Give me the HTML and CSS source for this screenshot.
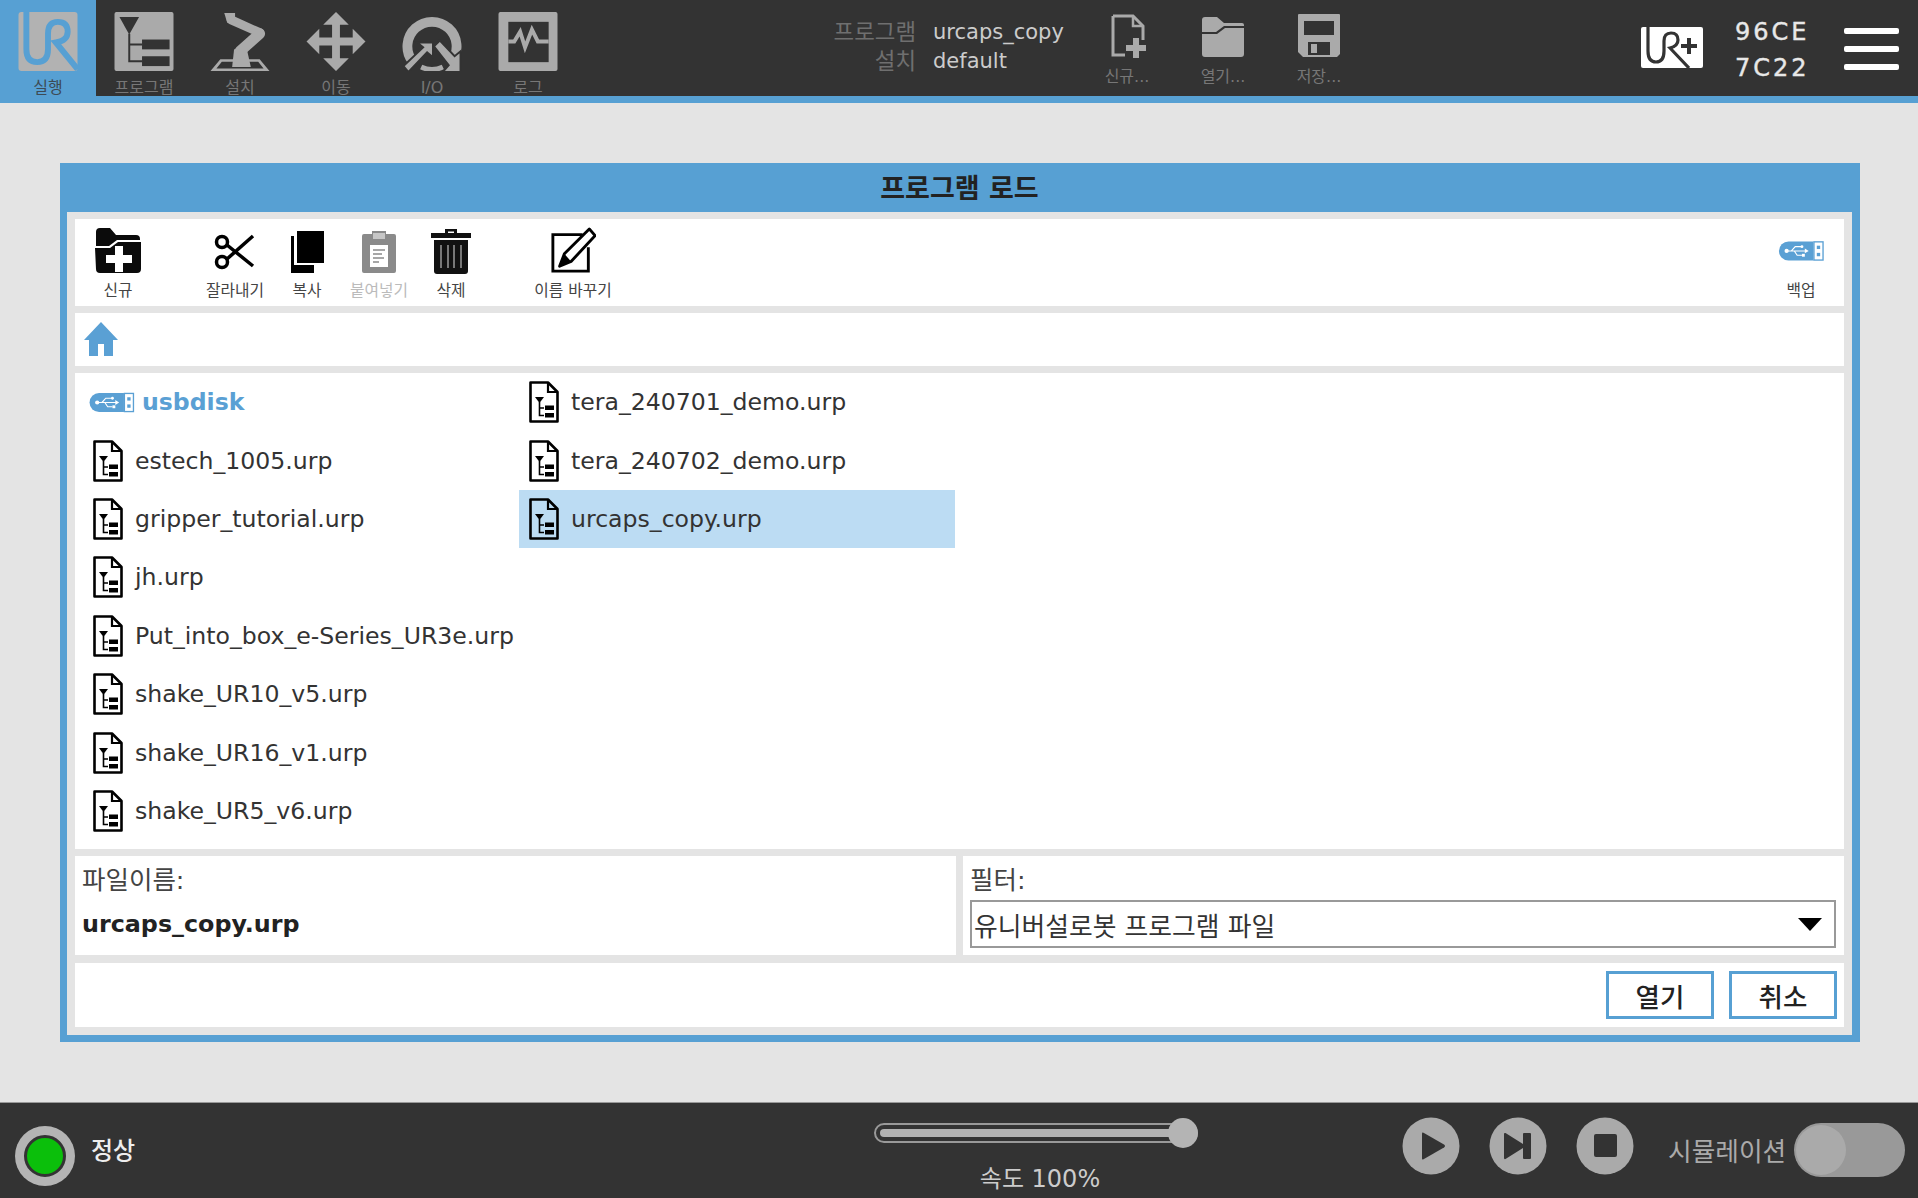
FILE: index.html
```html
<!DOCTYPE html>
<html lang="ko">

<head>
    <meta charset="UTF-8">
    <title>프로그램 로드</title>
    <link rel="stylesheet" href="styles.css">
</head>

<body>
    <svg class="defs" width="0" height="0">
        <symbol id="urp" viewBox="0 0 30 42">
            <path d="M1.500 1.500H19L28.500 11V40.500H1.500Z" fill="none" stroke="#000" stroke-width="2.6" stroke-linejoin="round"/>
            <path d="M19 1.500V11H28.500" fill="none" stroke="#000" stroke-width="2.2"/>
            <path d="M6 16H15L10.500 22Z" fill="#000"/>
            <path d="M10.500 21V34.500H15M10.500 27H15" fill="none" stroke="#000" stroke-width="1.6"/>
            <rect x="16" y="24.500" width="9" height="4.500"/>
            <rect x="16" y="32" width="9" height="4.500"/>
        </symbol>
        <symbol id="usb" viewBox="0 0 48 22">
            <path d="M11 1H37V21H11A10 10 0 0 1 11 1Z" fill="#5aa0d4"/>
            <rect x="37.500" y="1.500" width="9.500" height="19" fill="#fff" stroke="#5aa0d4" stroke-width="1.4"/>
            <rect x="40.500" y="5.500" width="3.500" height="3.500" fill="#5aa0d4"/>
            <rect x="40.500" y="13" width="3.500" height="3.500" fill="#5aa0d4"/>
            <path d="M9 11H29M14 11L18 6.500H24M17 11L20 15.500H25" fill="none" stroke="#fff" stroke-width="1.2"/>
            <circle cx="9" cy="11" r="2.200" fill="#fff"/>
            <circle cx="25" cy="6.500" r="1.500" fill="#fff"/>
            <rect x="25" y="14" width="3" height="3" fill="#fff"/>
            <path d="M28 8.500L32 11L28 13.500Z" fill="#fff"/>
        </symbol>
    </svg>

    <header class="topbar">
        <nav class="tabs">
            <div class="tab tab-active">
                <svg class="tab-icon" viewBox="0 0 60 60">
                    <rect width="60" height="60" rx="3" fill="#b2b2b2"/>
                    <path d="M8 0V38Q8 51 19 51Q30 51 30 38V22Q30 10 40 10Q50 10 50 20Q50 29 38 31L60 58" fill="none" stroke="#57a0d3" stroke-width="6"/>
                </svg>
                <span>실행</span>
            </div>
            <div class="tab">
                <svg class="tab-icon" viewBox="0 0 60 60">
                    <rect width="60" height="60" rx="2" fill="#aaa"/>
                    <path d="M5 5H25L15 23Z" fill="#333"/>
                    <path d="M15 22V50H28M15 33H28" fill="none" stroke="#333" stroke-width="2"/>
                    <rect x="28" y="28" width="28" height="10" fill="#333"/>
                    <rect x="28" y="45" width="28" height="10" fill="#333"/>
                </svg>
                <span>프로그램</span>
            </div>
            <div class="tab">
                <svg class="tab-icon" viewBox="0 0 60 60">
                    <path d="M0 60L10 48H50L60 60ZM6 57.500H54L48.500 50.500H11.500Z" fill="#aaa" fill-rule="evenodd"/>
                    <path d="M14 1H25V11H17Z" fill="#aaa"/>
                    <path d="M21 8L50 21" fill="none" stroke="#aaa" stroke-width="9" stroke-linecap="round"/>
                    <path d="M50 22L30 40" fill="none" stroke="#aaa" stroke-width="11" stroke-linecap="round"/>
                    <path d="M24 38H37L41 56H22Z" fill="#aaa"/>
                </svg>
                <span>설치</span>
            </div>
            <div class="tab">
                <svg class="tab-icon" viewBox="0 0 60 60">
                    <path d="M30 0L43 13H34V26H47V17L60 30L47 43V34H34V47H43L30 60L17 47H26V34H13V43L0 30L13 17V26H26V13H17Z" fill="#aaa"/>
                </svg>
                <span>이동</span>
            </div>
            <div class="tab">
                <svg class="tab-icon" viewBox="0 0 60 60">
                    <path d="M10 50A25 25 0 1 1 50 50" fill="none" stroke="#aaa" stroke-width="10"/>
                    <path d="M19 56A26 26 0 0 0 41 56" fill="none" stroke="#aaa" stroke-width="5"/>
                    <path d="M1 55L21 36L15 31H31V46L25 41L6 61Z" fill="#aaa" stroke="#333" stroke-width="2"/>
                    <path d="M32 35L38 29L53 45L59 40V61H41L47 54Z" fill="#aaa" stroke="#333" stroke-width="2"/>
                </svg>
                <span>I/O</span>
            </div>
            <div class="tab">
                <svg class="tab-icon" viewBox="0 0 60 60">
                    <rect width="60" height="60" rx="2" fill="#aaa"/>
                    <rect x="10" y="10" width="41" height="41" fill="#333"/>
                    <path d="M10 30H16L22 20L27 36L34 18L40 30H51" fill="none" stroke="#aaa" stroke-width="4"/>
                </svg>
                <span>로그</span>
            </div>
        </nav>

        <div class="prog-info">
            <span class="info-key">프로그램</span><span class="info-val">urcaps_copy</span>
            <span class="info-key">설치</span><span class="info-val">default</span>
        </div>

        <div class="file-btn">
            <svg class="file-icon" viewBox="0 0 44 44">
                <path d="M8 2H28L38 12V26M20 41H8V2" fill="none" stroke="#aaa" stroke-width="3"/>
                <path d="M28 2V12H38" fill="none" stroke="#aaa" stroke-width="2.500"/>
                <path d="M28 24H34V31H41V37H34V44H28V37H21V31H28Z" fill="#aaa"/>
            </svg>
            <span>신규...</span>
        </div>
        <div class="file-btn">
            <svg class="file-icon" viewBox="0 0 44 44">
                <path d="M1 6Q1 3 4 3H16L23 9H41Q43 9 43 11V12H23L15 18H1Z" fill="#aaa"/>
                <path d="M1 20H16L24 14H43V40Q43 43 40 43H4Q1 43 1 40Z" fill="#aaa"/>
            </svg>
            <span>열기...</span>
        </div>
        <div class="file-btn">
            <svg class="file-icon" viewBox="0 0 44 44">
                <path d="M2 0H42Q43 0 43 1V40L40 43H6L1 38V1Q1 0 2 0Z" fill="#aaa"/>
                <rect x="7" y="7" width="30" height="14" fill="#333"/>
                <rect x="11" y="28" width="22" height="13" fill="#333"/>
                <rect x="14" y="30" width="6" height="9" fill="#aaa"/>
            </svg>
            <span>저장...</span>
        </div>

        <svg class="ur-plus" viewBox="0 0 62 41">
            <path d="M2 0H60Q62 0 62 2V39Q62 41 60 41H2Q0 41 0 39V2Q0 0 2 0Z" fill="#fff"/>
            <path d="M7 0V24Q7 35 15 35Q23 35 23 24V14Q23 6 30 6Q37 6 37 13Q37 19 29 21L48 41" fill="none" stroke="#333" stroke-width="3.200"/>
            <path d="M46 11H50V17H56V21H50V27H46V21H40V17H46Z" fill="#333"/>
        </svg>

        <div class="serial">
            <span>96CE</span>
            <span>7C22</span>
        </div>

        <div class="menu-btn">
            <i></i><i></i><i></i>
        </div>
    </header>

    <main class="main">
        <section class="dialog">
            <h1 class="dialog-title">프로그램 로드</h1>
            <div class="dialog-body">
                <div class="panel toolbar">
                    <div class="tool">
                        <svg class="tool-icon" viewBox="0 0 46 46">
                            <path d="M1 5Q1 1 5 1H15L21 8H41Q45 8 45 12V13H22L14 19H1Z" fill="#0b0b0b"/>
                            <path d="M0 21H15L23 15H46V42Q46 46 42 46H5Q1 46 1 42Z" fill="#0b0b0b"/>
                            <path d="M20 19H28V28H37V36H28V45H20V36H11V28H20Z" fill="#fff"/>
                        </svg>
                        <span>신규</span>
                    </div>
                    <div class="tool tool-cut">
                        <svg class="tool-icon" viewBox="0 0 46 46">
                            <circle cx="10" cy="15" r="5.500" fill="none" stroke="#000" stroke-width="3.500"/>
                            <circle cx="10" cy="35" r="5.500" fill="none" stroke="#000" stroke-width="3.500"/>
                            <path d="M15 18L41 39M15 32L41 9" fill="none" stroke="#000" stroke-width="3.500"/>
                        </svg>
                        <span>잘라내기</span>
                    </div>
                    <div class="tool">
                        <svg class="tool-icon" viewBox="0 0 46 46">
                            <path d="M7 9H10V38H30V46H7Z" fill="#000"/>
                            <rect x="13" y="4" width="27" height="32" fill="#000"/>
                        </svg>
                        <span>복사</span>
                    </div>
                    <div class="tool tool-off">
                        <svg class="tool-icon" viewBox="0 0 46 46">
                            <path d="M8 7H16V4H30V7H38Q40 7 40 9V44Q40 46 38 46H8Q6 46 6 44V9Q6 7 8 7Z" fill="#8a8a8a"/>
                            <rect x="17" y="6" width="12" height="6" fill="#c6c6c6"/>
                            <rect x="14" y="18" width="18" height="22" fill="#fff"/>
                            <path d="M17 23H29M17 27H26M17 31H28M17 35H23" stroke="#8a8a8a" stroke-width="1.500"/>
                        </svg>
                        <span>붙여넣기</span>
                    </div>
                    <div class="tool">
                        <svg class="tool-icon" viewBox="0 0 46 46">
                            <path d="M17 6V2H29V6H43V11H3V6ZM20 4.500V6H26V4.500Z" fill="#111" fill-rule="evenodd"/>
                            <path d="M6 13H40V44Q40 47 37 47H9Q6 47 6 44Z" fill="#111"/>
                            <path d="M13 18V41M20 18V41M26 18V41M33 18V41" stroke="#777" stroke-width="2"/>
                        </svg>
                        <span>삭제</span>
                    </div>
                    <div class="tool tool-rename">
                        <svg class="tool-icon" viewBox="0 0 48 46">
                            <path d="M34 7H3V45H40V20" fill="none" stroke="#000" stroke-width="3"/>
                            <path d="M41 1L47 8L22 35L10 40L15 27Z" fill="#fff" stroke="#000" stroke-width="3" stroke-linejoin="round"/>
                            <path d="M10 40L15 27L22 35Z" fill="#000"/>
                        </svg>
                        <span>이름 바꾸기</span>
                    </div>
                    <div class="tool tool-backup">
                        <svg class="tool-icon" viewBox="0 0 48 46"><use href="#usb" x="0" y="13" width="48" height="22"/></svg>
                        <span>백업</span>
                    </div>
                </div>

                <div class="panel path-bar">
                    <svg class="home" viewBox="0 0 34 34">
                        <path d="M17 0L34 18H29V34H20V22H14V34H5V18H0Z" fill="#5aa0d4"/>
                    </svg>
                </div>

                <div class="panel file-list">
                    <div class="row row-usb">
                        <svg class="usb-icon"><use href="#usb"/></svg>
                        <span>usbdisk</span>
                    </div>
                    <div class="row"><svg class="urp-icon"><use href="#urp"/></svg><span>estech_1005.urp</span></div>
                    <div class="row"><svg class="urp-icon"><use href="#urp"/></svg><span>gripper_tutorial.urp</span></div>
                    <div class="row"><svg class="urp-icon"><use href="#urp"/></svg><span>jh.urp</span></div>
                    <div class="row"><svg class="urp-icon"><use href="#urp"/></svg><span>Put_into_box_e-Series_UR3e.urp</span></div>
                    <div class="row"><svg class="urp-icon"><use href="#urp"/></svg><span>shake_UR10_v5.urp</span></div>
                    <div class="row"><svg class="urp-icon"><use href="#urp"/></svg><span>shake_UR16_v1.urp</span></div>
                    <div class="row"><svg class="urp-icon"><use href="#urp"/></svg><span>shake_UR5_v6.urp</span></div>
                    <div class="row"><svg class="urp-icon"><use href="#urp"/></svg><span>tera_240701_demo.urp</span></div>
                    <div class="row"><svg class="urp-icon"><use href="#urp"/></svg><span>tera_240702_demo.urp</span></div>
                    <div class="row row-selected"><svg class="urp-icon"><use href="#urp"/></svg><span>urcaps_copy.urp</span></div>
                </div>

                <div class="field-row">
                    <div class="panel field">
                        <label class="field-label">파일이름:</label>
                        <div class="field-value">urcaps_copy.urp</div>
                    </div>
                    <div class="panel field">
                        <label class="field-label">필터:</label>
                        <div class="select">
                            <span>유니버설로봇 프로그램 파일</span>
                            <i class="select-arrow"></i>
                        </div>
                    </div>
                </div>

                <div class="panel actions">
                    <button class="action-btn" type="button">열기</button>
                    <button class="action-btn" type="button">취소</button>
                </div>
            </div>
        </section>
    </main>

    <footer class="bottombar">
        <div class="status-light"><i></i></div>
        <div class="status-text">정상</div>

        <div class="speed">
            <div class="slider">
                <div class="slider-fill"></div>
                <div class="slider-knob"></div>
            </div>
            <div class="speed-text">속도 100%</div>
        </div>

        <div class="controls">
            <svg class="ctl" viewBox="0 0 58 58">
                <circle cx="29" cy="29" r="28.500" fill="#aaa"/>
                <path d="M20 16.500Q20 15 21.500 15.800L42 27.500Q44 29 42 30.500L21.500 42.200Q20 43 20 41.500Z" fill="#333"/>
            </svg>
            <svg class="ctl" viewBox="0 0 58 58">
                <circle cx="29" cy="29" r="28.500" fill="#aaa"/>
                <path d="M15 17Q15 15.500 16.500 16L34 27V17Q34 16 35 16H41Q42 16 42 17V41Q42 42 41 42H35Q34 42 34 41V31L16.500 42Q15 42.500 15 41Z" fill="#333"/>
            </svg>
            <svg class="ctl" viewBox="0 0 58 58">
                <circle cx="29" cy="29" r="28.500" fill="#aaa"/>
                <rect x="18" y="17" width="23" height="23" rx="2" fill="#333"/>
            </svg>
        </div>

        <div class="sim-text">시뮬레이션</div>
        <div class="toggle"><i></i></div>
    </footer>
</body>

</html>
```

FILE: styles.css
```css
* {
    box-sizing: border-box;
}

html,
body {
    margin: 0;
    padding: 0;
}

body {
    width: 1918px;
    height: 1198px;
    overflow: hidden;
    display: flex;
    flex-direction: column;
    background-color: #e4e4e4;
    font-family: "DejaVu Sans", "Noto Sans CJK KR", sans-serif;
}

.defs {
    position: absolute;
}

/* top bar */
.topbar {
    height: 103px;
    display: flex;
    align-items: flex-start;
    background-color: #333;
    border-bottom: 7px solid #57a0d3;
}

.tabs {
    display: flex;
}

.tab {
    width: 96px;
    height: 96px;
    display: flex;
    flex-direction: column;
    align-items: center;
    padding-top: 12px;
    font-size: 16px;
    line-height: 16px;
    color: #777;
}

.tab-active {
    background-color: #57a0d3;
    color: #3d4a55;
}

.tab-icon {
    width: 60px;
    height: 60px;
    margin-bottom: 9px;
}

.prog-info {
    width: 263px;
    margin-left: 240px;
    margin-top: 18px;
    display: grid;
    grid-template-columns: 100px auto;
    column-gap: 17px;
    align-content: start;
    font-size: 21px;
    line-height: 29px;
}

.info-key {
    text-align: right;
    font-size: 22.400px;
    color: #6f6f6f;
}

.info-val {
    color: #ccc;
}

.file-btn {
    width: 96px;
    padding-top: 14px;
    display: flex;
    flex-direction: column;
    align-items: center;
    font-size: 16px;
    line-height: 16px;
    color: #777;
}

.file-icon {
    width: 44px;
    height: 44px;
    margin-bottom: 11px;
}

.ur-plus {
    width: 62px;
    height: 41px;
    margin-left: 274px;
    margin-top: 27px;
}

.serial {
    width: 80px;
    margin-left: 32px;
    margin-top: 14px;
    display: flex;
    flex-direction: column;
    font-size: 24px;
    line-height: 36px;
    letter-spacing: 3px;
    color: #e8e8e8;
    -webkit-text-stroke: 0.4px #e8e8e8;
}

.menu-btn {
    width: 55px;
    margin-left: 29px;
    margin-top: 28px;
    display: flex;
    flex-direction: column;
    gap: 12px;
}

.menu-btn i {
    display: block;
    height: 6px;
    border-radius: 2px;
    background-color: #fff;
}

/* dialog */
.main {
    flex: 1;
    padding: 60px 58px 60px 60px;
}

.dialog {
    height: 879px;
    display: flex;
    flex-direction: column;
    background-color: #57a0d3;
    padding: 0 8px 7px 7px;
}

.dialog-title {
    height: 49px;
    margin: 0;
    padding-top: 1px;
    font-size: 27px;
    font-weight: bold;
    line-height: 49px;
    text-align: center;
    color: #222;
}

.dialog-body {
    flex: 1;
    display: flex;
    flex-direction: column;
    gap: 7px;
    padding: 7px 8px 8px 8px;
    background-color: #e4e4e4;
}

.panel {
    background-color: #fff;
}

.toolbar {
    height: 87px;
    display: flex;
    padding: 0 3px;
}

.tool {
    width: 72px;
    padding-top: 7px;
    display: flex;
    flex-direction: column;
    align-items: center;
    font-size: 15.800px;
    line-height: 18px;
    white-space: nowrap;
    color: #444;
}

.tool:first-child {
    width: 80px;
}

.tool-icon {
    width: 46px;
    height: 48px;
    margin-bottom: 8px;
}

.tool-cut {
    margin-left: 41px;
}

.tool-rename {
    width: 100px;
    margin-left: 36px;
}

.tool-backup {
    margin-left: auto;
    width: 80px;
}

.tool-off {
    color: #bbb;
}

.path-bar {
    height: 53px;
    display: flex;
    align-items: center;
    padding-left: 9px;
    padding-bottom: 2px;
}

.home {
    width: 34px;
    height: 34px;
}

.file-list {
    height: 476px;
    padding-left: 8px;
    display: grid;
    grid-auto-flow: column;
    grid-template-rows: repeat(8, 58.4px);
    grid-template-columns: 436px 436px;
    align-content: start;
    font-size: 23.600px;
    color: #333;
}

.row {
    display: flex;
    align-items: center;
    gap: 12px;
    padding-left: 10px;
    white-space: nowrap;
}

.row-selected {
    background-color: #bcdcf3;
}

.row-usb {
    gap: 7px;
    padding-left: 5px;
    font-weight: bold;
    color: #5aa0d4;
}

.urp-icon {
    width: 30px;
    height: 42px;
    flex: none;
}

.usb-icon {
    width: 47px;
    height: 21px;
    flex: none;
}

.field-row {
    height: 99px;
    display: grid;
    grid-template-columns: 1fr 1fr;
    gap: 7px;
    margin-bottom: 1px;
}

.field {
    padding: 9px 8px 0 7px;
}

.field-label {
    display: block;
    height: 35px;
    font-size: 25.500px;
    line-height: 30px;
    color: #444;
}

.field-value {
    font-size: 23.800px;
    font-weight: bold;
    line-height: 48px;
    color: #222;
}

.select {
    height: 48px;
    display: flex;
    align-items: center;
    justify-content: space-between;
    padding: 0 12px 0 2px;
    border: 2px solid #999;
    font-size: 25.800px;
    color: #333;
}

.select-arrow {
    width: 0;
    height: 0;
    border-left: 12px solid transparent;
    border-right: 12px solid transparent;
    border-top: 13px solid #000;
}

.actions {
    height: 64px;
    display: flex;
    justify-content: flex-end;
    align-items: center;
    gap: 15px;
    padding-right: 7px;
}

.action-btn {
    width: 108px;
    height: 48px;
    border: 3px solid #57a0d3;
    border-radius: 0;
    background-color: #fff;
    font-family: inherit;
    font-size: 26.500px;
    font-weight: 500;
    color: #222;
}

/* bottom bar */
.bottombar {
    height: 96px;
    display: flex;
    align-items: flex-start;
    background-color: #333;
    border-top: 1px solid #999;
}

.status-light {
    width: 60px;
    height: 60px;
    margin-left: 15px;
    margin-top: 23px;
    padding: 9px;
    border-radius: 50%;
    background-color: #b4b4b4;
}

.status-light i {
    display: block;
    width: 42px;
    height: 42px;
    border-radius: 50%;
    border: 3px solid #333;
    background-color: #0bbf0b;
}

.status-text {
    width: 50px;
    margin-left: 16px;
    margin-top: 36px;
    font-size: 24px;
    font-weight: 500;
    line-height: 24px;
    white-space: nowrap;
    color: #eee;
}

.speed {
    width: 332px;
    margin-left: 733px;
    margin-top: 20px;
}

.slider {
    position: relative;
    width: 324px;
    height: 20px;
    padding: 4px;
    border: 2px solid #999;
    border-radius: 10px;
    background-color: #333;
}

.slider-fill {
    height: 8px;
    border-radius: 4px;
    background-color: #b2b2b2;
}

.slider-knob {
    position: absolute;
    left: 292px;
    top: -7px;
    width: 30px;
    height: 30px;
    border-radius: 50%;
    background-color: #b4b4b4;
}

.speed-text {
    margin-top: 23px;
    font-size: 24px;
    line-height: 26px;
    text-align: center;
    color: #ccc;
}

.controls {
    display: flex;
    gap: 29px;
    margin-left: 196px;
    margin-top: 14px;
}

.ctl {
    width: 58px;
    height: 58px;
}

.sim-text {
    width: 118px;
    margin-left: 34px;
    margin-top: 35px;
    font-size: 25.700px;
    line-height: 28px;
    white-space: nowrap;
    color: #aaa;
}

.toggle {
    width: 111px;
    height: 54px;
    margin-left: 8px;
    margin-top: 20px;
    padding: 2px;
    border-radius: 27px;
    background-color: #999;
}

.toggle i {
    display: block;
    width: 50px;
    height: 50px;
    border-radius: 50%;
    background-color: #aaa;
}
```
